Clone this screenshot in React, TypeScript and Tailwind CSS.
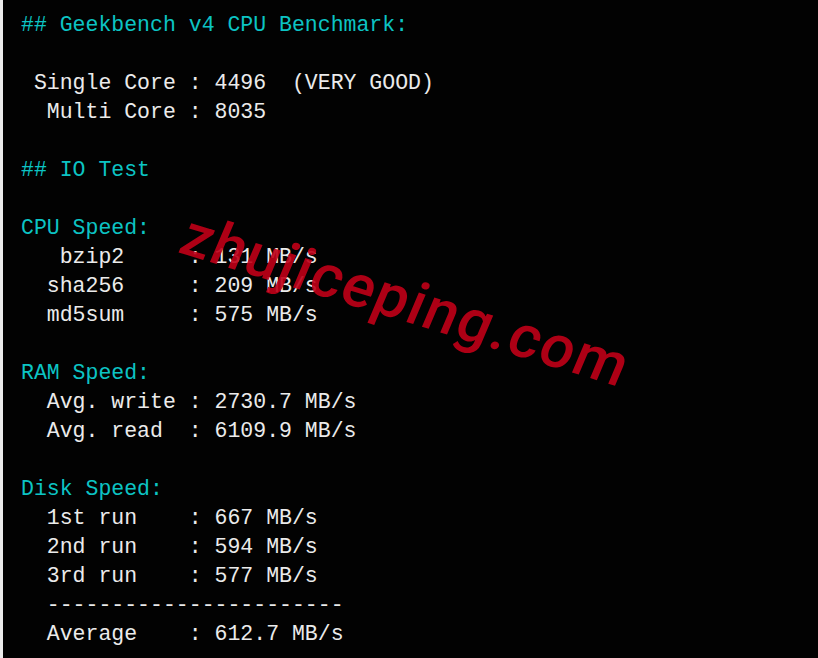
import React from 'react';

type Line = { text: string; head?: boolean };

const LINES: Line[] = [
  { text: '## Geekbench v4 CPU Benchmark:', head: true },
  { text: '' },
  { text: ' Single Core : 4496  (VERY GOOD)' },
  { text: '  Multi Core : 8035' },
  { text: '' },
  { text: '## IO Test', head: true },
  { text: '' },
  { text: 'CPU Speed:', head: true },
  { text: '   bzip2     : 131 MB/s' },
  { text: '  sha256     : 209 MB/s' },
  { text: '  md5sum     : 575 MB/s' },
  { text: '' },
  { text: 'RAM Speed:', head: true },
  { text: '  Avg. write : 2730.7 MB/s' },
  { text: '  Avg. read  : 6109.9 MB/s' },
  { text: '' },
  { text: 'Disk Speed:', head: true },
  { text: '  1st run    : 667 MB/s' },
  { text: '  2nd run    : 594 MB/s' },
  { text: '  3rd run    : 577 MB/s' },
  { text: '  -----------------------' },
  { text: '  Average    : 612.7 MB/s' },
];

const App: React.FC = () => {
  return (
    <div className="w-[818px] h-[658px] flex bg-[#020202] overflow-hidden">
      {/* light strip along the left edge */}
      <div className="w-[3px] h-full bg-[#ececec] shrink-0" />
      <div className="relative flex-1 pt-[11px] pl-[18px]">
        <div className="font-['Liberation_Mono',monospace] text-[21.5px] leading-[29px] whitespace-pre">
          {LINES.map((l, i) => (
            <div key={i} className={l.head ? 'text-[#0cc4c4]' : 'text-[#ebebeb]'}>
              {l.text || ' '}
            </div>
          ))}
        </div>

        {/* watermark */}
        <div className="absolute left-[403px] top-[301px] -translate-x-1/2 -translate-y-1/2 rotate-[17deg] pointer-events-none">
          <span className="block -skew-x-6 font-['Roboto',sans-serif] font-medium text-[60px] leading-none tracking-[1.5px] text-[#c00018] opacity-90 whitespace-nowrap">
            zhujiceping.com
          </span>
        </div>
      </div>
    </div>
  );
};

export default App;
